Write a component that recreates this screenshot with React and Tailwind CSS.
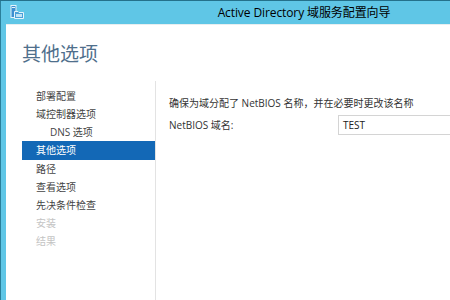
export default function App() {
  const font = { fontFamily: '"Open Sans", "Noto Sans", "Noto Sans CJK SC", sans-serif' };
  const nav = [
    { t: "部署配置" },
    { t: "域控制器选项" },
    { t: "DNS 选项", indent: true },
    { t: "其他选项", sel: true },
    { t: "路径" },
    { t: "查看选项" },
    { t: "先决条件检查" },
    { t: "安装", dis: true },
    { t: "结果", dis: true },
  ];
  return (
    <div className="w-[450px] h-[300px] overflow-hidden bg-[#2a7f9a] flex flex-col" style={font}>
      <div className="h-[1px] bg-[#24718b]" />
      <div className="flex flex-1 min-h-0">
        <div className="w-[1px] bg-[#2a7f9a]" />
        <div className="flex-1 flex flex-col bg-[#5fc6e6] pl-[5px]">
          <div className="h-[23px] relative flex items-center justify-center">
            <svg className="absolute left-[3px] top-[3px]" width="16" height="16" viewBox="0 0 16 16">
              <rect x="2" y="1.5" width="5" height="12" fill="#3c8fd0" stroke="#e6f4fb" strokeWidth="1" />
              <rect x="3" y="3" width="3" height="1" fill="#e6f4fb" />
              <path d="M5.5 7.5 H9 L10 8.5 H14.5 V14.5 H5.5 Z" fill="#4aa0d8" stroke="#e6f4fb" strokeWidth="1" />
              <rect x="7" y="10" width="6" height="3" fill="#bfe3f5" />
            </svg>
            <span className="text-[12px] text-black pl-[152px] leading-none tracking-[-0.1px] whitespace-nowrap">
              Active Directory 域服务配置向导
            </span>
          </div>
          <div className="h-[1px] bg-[#e8eef0]" />
          <div className="flex-1 bg-white flex flex-col">
            <div className="pl-[16px] pt-[17px] h-[56px] text-[19px] leading-[24px] text-[#4f6f8c]">其他选项</div>
            <div className="flex flex-1">
              <div className="w-[150px] pl-[16px] pt-[6px] flex flex-col border-r border-[#e3e3e3]">
                {nav.map((n) => (
                  <div
                    key={n.t}
                    className={
                      "h-[18px] flex items-center text-[10px] whitespace-nowrap " +
                      (n.indent ? "pl-[28px] " : "pl-[14px] ") +
                      (n.sel ? "bg-[#1368b6] text-white h-[19px] " : n.dis ? "text-[#c4c4c4] " : "text-[#444] ")
                    }
                  >
                    {n.t}
                  </div>
                ))}
              </div>
              <div className="flex-1 pl-[13px] pt-[14px] text-[10px] text-[#333]">
                <div className="h-[16px] flex items-center whitespace-nowrap">确保为域分配了 NetBIOS 名称，并在必要时更改该名称</div>
                <div className="flex items-center mt-[4px]">
                  <div className="w-[169px] whitespace-nowrap">NetBIOS 域名:</div>
                  <div className="flex-1 h-[20px] border border-[#d4d4d4] border-r-0 flex items-center pl-[4px] text-[#222]">TEST</div>
                </div>
              </div>
            </div>
          </div>
        </div>
      </div>
    </div>
  );
}
